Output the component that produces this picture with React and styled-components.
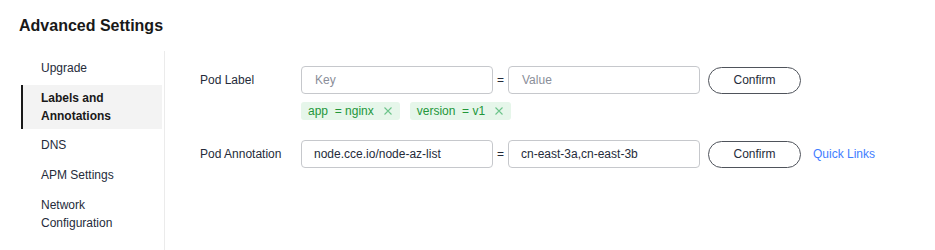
import React from "react";
import styled, { createGlobalStyle } from "styled-components";

const Global = createGlobalStyle`
  html, body { margin: 0; padding: 0; background: #fff; overflow: hidden; }
  body { font-family: "Liberation Sans", Arial, sans-serif; font-size: 12px; color: #252b3a; }
  * { box-sizing: border-box; }
`;

const Page = styled.div`
  padding: 14px 0 0 19px;
`;

const Title = styled.h2`
  margin: 0;
  font-size: 16px;
  line-height: 24px;
  font-weight: 700;
  color: #191919;
`;

const Body = styled.div`
  display: flex;
  margin-top: 13px;
  margin-left: 2px;
`;

const Side = styled.nav`
  width: 144px;
  height: 199px;
  padding: 3px 2px 0 0;
  border-right: 1px solid #ebebeb;
  display: flex;
  flex-direction: column;
  gap: 2px;
`;

const NavItem = styled.div`
  padding: ${(p) => (p.$active ? "4px" : "5px")} 8px ${(p) => (p.$active ? "4px" : "5px")}
    ${(p) => (p.$active ? 18 : 20)}px;
  margin-top: ${(p) => (p.$active ? 1 : 0)}px;
  line-height: 18px;
  font-size: 12px;
  color: ${(p) => (p.$active ? "#191919" : "#252b3a")};
  font-weight: ${(p) => (p.$active ? 700 : 400)};
  background: ${(p) => (p.$active ? "#f3f3f3" : "transparent")};
  border-left: ${(p) => (p.$active ? "2px solid #191919" : "none")};
`;

const Content = styled.div`
  padding: 15px 0 0 35px;
  display: flex;
  flex-direction: column;
`;

const Row = styled.div`
  display: flex;
  align-items: center;
  height: 28px;
  margin-top: ${(p) => p.$mt || 0}px;
`;

const Label = styled.div`
  width: 101px;
  color: #252b3a;
  font-size: 12px;
`;

const Input = styled.div`
  width: 192px;
  height: 28px;
  border: 1px solid #c6c8cc;
  border-radius: 4px;
  display: flex;
  align-items: center;
  font-size: 12px;
  color: ${(p) => (p.$placeholder ? "#8a8e99" : "#252b3a")};
  padding: 0 12px 0 ${(p) => (p.$placeholder ? 13 : 12)}px;
`;

const Eq = styled.span`
  width: 15px;
  text-align: center;
  color: #252b3a;
`;

const Button = styled.button`
  margin-left: 8px;
  width: 93px;
  height: 27px;
  border: 1px solid #4f535b;
  border-radius: 14px;
  background: #fff;
  font-family: inherit;
  font-size: 12px;
  color: #252b3a;
  cursor: pointer;
  padding: 0;
`;

const Link = styled.a`
  margin-left: 12px;
  color: #3f7dff;
  font-size: 12px;
  text-decoration: none;
`;

const Tags = styled.div`
  display: flex;
  gap: 10px;
  margin: 8px 0 0 101px;
`;

const Tag = styled.span`
  display: inline-flex;
  align-items: center;
  height: 18px;
  padding: 0 8px 0 7px;
  border-radius: 3px;
  background: #e6f6ea;
  color: #23963a;
  font-size: 12px;
  white-space: pre;
`;

const Close = styled.svg`
  margin-left: 10px;
  width: 8px;
  height: 8px;
`;

const X = () => (
  <Close viewBox="0 0 8 8">
    <path d="M0.5 0.5 L7.5 7.5 M7.5 0.5 L0.5 7.5" stroke="#6cc48a" strokeWidth="1.1" fill="none" />
  </Close>
);

const items = ["Upgrade", "Labels and Annotations", "DNS", "APM Settings", "Network Configuration"];

export default function App() {
  return (
    <Page>
      <Global />
      <Title>Advanced Settings</Title>
      <Body>
        <Side>
          {items.map((t, i) => (
            <NavItem key={t} $active={i === 1}>
              {t}
            </NavItem>
          ))}
        </Side>
        <Content>
          <Row>
            <Label>Pod Label</Label>
            <Input $placeholder>Key</Input>
            <Eq>=</Eq>
            <Input $placeholder>Value</Input>
            <Button>Confirm</Button>
          </Row>
          <Tags>
            <Tag>
              {"app  = nginx"}
              <X />
            </Tag>
            <Tag>
              {"version  = v1"}
              <X />
            </Tag>
          </Tags>
          <Row $mt={20}>
            <Label>Pod Annotation</Label>
            <Input>node.cce.io/node-az-list</Input>
            <Eq>=</Eq>
            <Input>cn-east-3a,cn-east-3b</Input>
            <Button>Confirm</Button>
            <Link href="#">Quick Links</Link>
          </Row>
        </Content>
      </Body>
    </Page>
  );
}
